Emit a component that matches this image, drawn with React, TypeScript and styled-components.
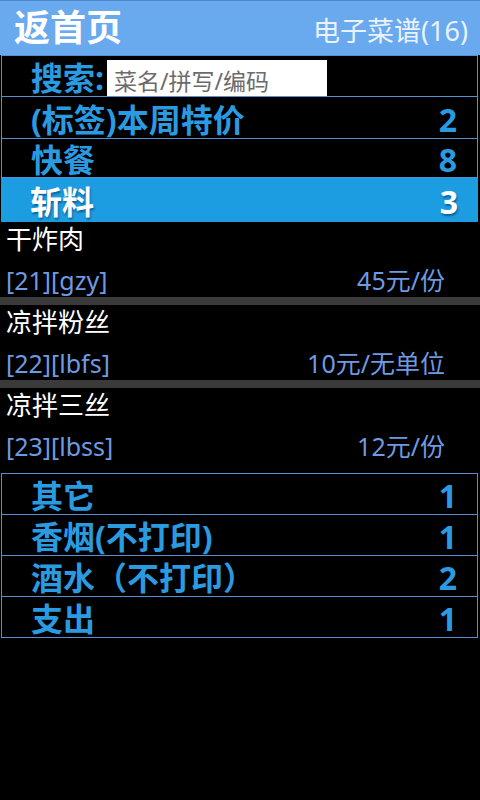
import React from "react";
import styled, { createGlobalStyle } from "styled-components";

const Global = createGlobalStyle`
  html, body { margin: 0; padding: 0; background: #000; }
  * { box-sizing: border-box; }
`;

const FONT = `"Noto Sans", "Noto Sans CJK SC", sans-serif`;
const BORDER = "#5590d4";

const Page = styled.div`
  width: 480px;
  min-height: 800px;
  background: #000;
  font-family: ${FONT};
  overflow: hidden;
`;

const Header = styled.header`
  height: 55px;
  background: #69a9ee;
  border-top: 1px solid #4d86c9;
  display: flex;
  align-items: center;
  justify-content: space-between;
  padding: 0 12px 0 14px;
`;

const HomeLink = styled.div`
  color: #fff;
  font-size: 36px;
  font-weight: 700;
  line-height: 1;
`;

const Title = styled.div`
  color: #eaf2ff;
  font-size: 27px;
  line-height: 1;
  margin-top: 4px;
`;

const CatList = styled.div<{ $top?: number }>`
  margin: ${(p) => p.$top ?? 0}px 2px 0 1px;
  display: flex;
  flex-direction: column;
`;

const CatRow = styled.div<{ $h: number; $active?: boolean; $first?: boolean }>`
  height: ${(p) => p.$h}px;
  display: flex;
  align-items: center;
  justify-content: space-between;
  padding: 0 20px 0 29px;
  background: ${(p) => (p.$active ? "#1c9de2" : "#000")};
  border: ${(p) => (p.$active ? "none" : `1px solid ${BORDER}`)};
  border-top: ${(p) => (p.$first && !p.$active ? `1px solid ${BORDER}` : "none")};
  color: ${(p) => (p.$active ? "#fff" : "#2a9be0")};
  font-size: 32px;
  font-weight: 700;
  line-height: 1;
  text-shadow: ${(p) => (p.$active ? "1px 2px 2px rgba(0,40,80,0.5)" : "none")};
`;

const CatLabel = styled.span`
  white-space: nowrap;
  padding-top: 4px;
`;

const CatCount = styled.span`
  padding-top: 4px;
`;

const SearchRow = styled.div`
  height: 42px;
  display: flex;
  align-items: stretch;
  padding-left: 29px;
  border: 1px solid ${BORDER};
`;

const SearchLabel = styled.span`
  color: #2a9be0;
  font-size: 32px;
  font-weight: 700;
  line-height: 1;
  align-self: center;
  padding-top: 4px;
  width: 76px;
  white-space: nowrap;
`;

const SearchBox = styled.div`
  width: 220px;
  margin-top: 4px;
  background: #fff;
  color: #6b6b6b;
  font-size: 23px;
  display: flex;
  align-items: center;
  padding-left: 7px;
  padding-top: 4px;
`;

const Items = styled.div`
  display: flex;
  flex-direction: column;
`;

const Item = styled.div`
  height: 75px;
  display: flex;
  flex-direction: column;
  padding: 0 35px 0 6px;
`;

const ItemName = styled.div`
  color: #fff;
  font-size: 26px;
  line-height: 1;
  margin-top: 4px;
`;

const ItemMeta = styled.div`
  display: flex;
  justify-content: space-between;
  color: #6e9ae2;
  font-size: 25px;
  line-height: 1;
  margin-top: 16px;
`;

const Separator = styled.div`
  height: 8px;
  background: #3a3a3a;
`;

const items = [
  { name: "干炸肉", code: "[21][gzy]", price: "45元/份" },
  { name: "凉拌粉丝", code: "[22][lbfs]", price: "10元/无单位" },
  { name: "凉拌三丝", code: "[23][lbss]", price: "12元/份" },
];

const bottomCats = [
  { label: "其它", n: 1 },
  { label: "香烟(不打印)", n: 1 },
  { label: "酒水（不打印）", n: 2 },
  { label: "支出", n: 1 },
];

export default function App() {
  return (
    <Page>
      <Global />
      <Header>
        <HomeLink>返首页</HomeLink>
        <Title>电子菜谱(16)</Title>
      </Header>
      <CatList>
        <SearchRow>
          <SearchLabel>搜索:</SearchLabel>
          <SearchBox>菜名/拼写/编码</SearchBox>
        </SearchRow>
        <CatRow $h={42}>
          <CatLabel>(标签)本周特价</CatLabel>
          <CatCount>2</CatCount>
        </CatRow>
        <CatRow $h={39}>
          <CatLabel>快餐</CatLabel>
          <CatCount>8</CatCount>
        </CatRow>
        <CatRow $h={44} $active>
          <CatLabel>斩料</CatLabel>
          <CatCount>3</CatCount>
        </CatRow>
      </CatList>
      <Items>
        {items.map((it, i) => (
          <React.Fragment key={it.code}>
            {i > 0 && <Separator />}
            <Item>
              <ItemName>{it.name}</ItemName>
              <ItemMeta>
                <span>{it.code}</span>
                <span>{it.price}</span>
              </ItemMeta>
            </Item>
          </React.Fragment>
        ))}
      </Items>
      <CatList $top={10}>
        {bottomCats.map((c, i) => (
          <CatRow key={c.label} $h={i === 0 ? 42 : 41} $first={i === 0}>
            <CatLabel>{c.label}</CatLabel>
            <CatCount>{c.n}</CatCount>
          </CatRow>
        ))}
      </CatList>
    </Page>
  );
}
